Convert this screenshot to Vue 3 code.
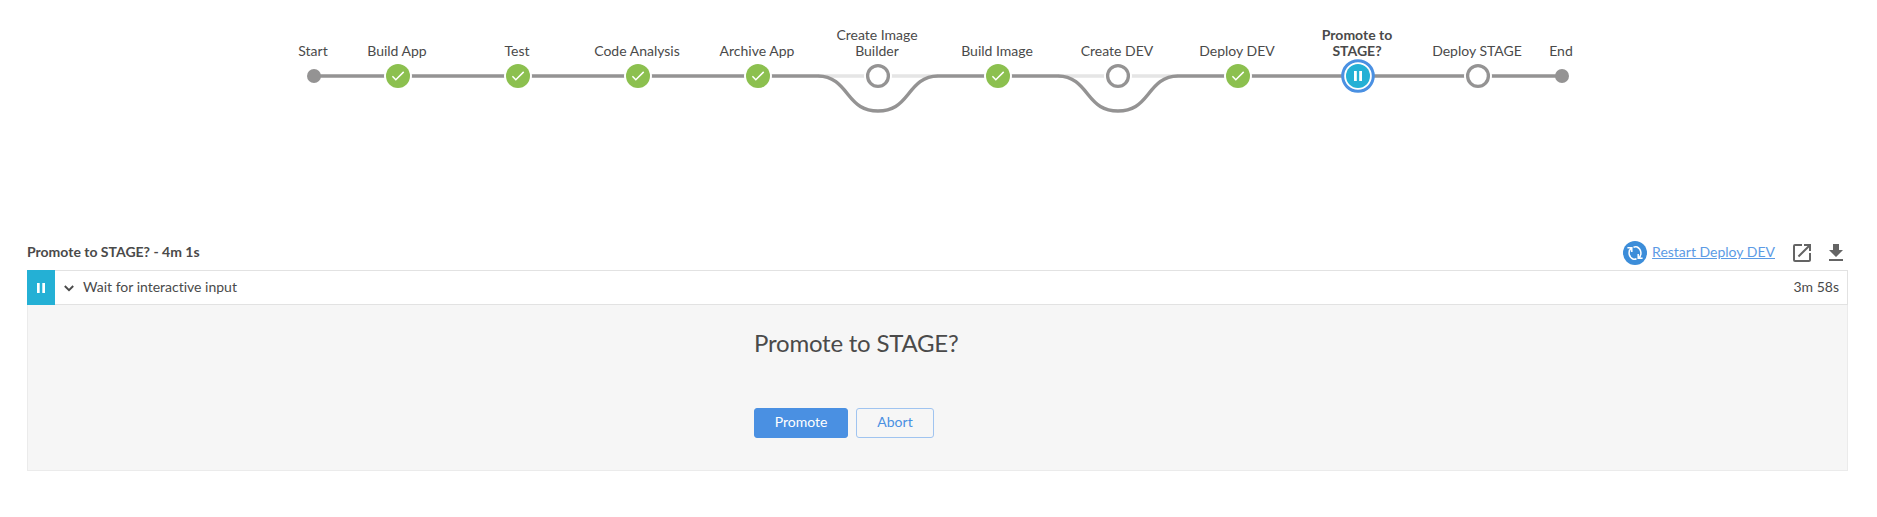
<script setup>
const stages = [
  { name: 'Start', x: 314, type: 'dot' },
  { name: 'Build App', x: 398, type: 'success' },
  { name: 'Test', x: 518, type: 'success' },
  { name: 'Code Analysis', x: 638, type: 'success' },
  { name: 'Archive App', x: 758, type: 'success' },
  { name: 'Create Image Builder', x: 878, type: 'skipped' },
  { name: 'Build Image', x: 998, type: 'success' },
  { name: 'Create DEV', x: 1118, type: 'skipped' },
  { name: 'Deploy DEV', x: 1238, type: 'success' },
  { name: 'Promote to STAGE?', x: 1358, type: 'paused' },
  { name: 'Deploy STAGE', x: 1478, type: 'pending' },
  { name: 'End', x: 1562, type: 'dot' },
]
const bypasses = [878, 1118]
</script>

<template>
  <main class="page">
    <section class="graph">
      <svg width="1877" height="140" viewBox="0 0 1877 140">
        <g class="line">
          <path class="faint" d="M818 76H938M1058 76H1178" />
          <path d="M314 76H818M938 76H1058M1178 76H1562" />
          <path
            v-for="x in bypasses"
            :key="x"
            :transform="`translate(${x} 76)`"
            d="M-60 0C-45 0-37.5 9-30 18.5C-22 28.5-15 35 0 35S22 28.5 30 18.5C37.5 9 45 0 60 0"
          />
        </g>
        <g v-for="s in stages" :key="s.name" :transform="`translate(${s.x} 76)`">
          <circle v-if="s.type === 'dot'" r="7" fill="#949393" />
          <template v-else-if="s.type === 'success'">
            <circle r="14" fill="#fff" />
            <circle r="12" fill="#8cc04f" />
            <path class="check" d="M-5.6.3L-2.2 3.7L5.7-4.1" />
          </template>
          <template v-else-if="s.type === 'paused'">
            <circle r="15.3" fill="#fff" stroke="#4a90e2" stroke-width="3" />
            <circle r="12" fill="#24b0d5" />
            <path fill="#fff" d="M-4-5h2.8V5H-4zM1.2-5H4V5H1.2z" />
          </template>
          <template v-else>
            <circle r="14" fill="#fff" />
            <circle r="10.4" fill="#fff" stroke="#949393" stroke-width="3.3" />
          </template>
        </g>
      </svg>
      <div
        v-for="s in stages"
        :key="s.name"
        class="label"
        :class="{ selected: s.type === 'paused' }"
        :style="{ left: `${s.x - 51}px` }"
      >{{ s.name }}</div>
    </section>

    <section class="steps">
      <header class="head">
        <h2>Promote to STAGE? - 4m 1s</h2>
        <div class="tools">
          <svg class="restart" width="24" height="24" viewBox="0 0 24 24">
            <circle cx="12" cy="12" r="12" fill="#3c8dd9" />
            <g fill="none" stroke="#fff" stroke-width="1.5">
              <path d="M4.4 6.7H8.8V11M8.6 6.8C4.9 9.5 5.1 15.9 10.4 18.3" />
              <path d="M19.6 17.3H15.2V13M15.4 17.2C19.1 14.5 18.9 8.1 13.6 5.7" />
              <path d="M10.5 6.2C11.7 5.7 12.9 5.6 14 5.9M13.5 17.8C12.3 18.3 11.1 18.4 10 18.1" />
            </g>
          </svg>
          <a>Restart Deploy DEV</a>
          <svg class="open" width="24" height="24" viewBox="0 0 24 24" fill="#646464">
            <path d="M19 19H5V5h7V3H5a2 2 0 0 0-2 2v14a2 2 0 0 0 2 2h14c1.1 0 2-.9 2-2v-7h-2v7zM14 3v2h3.59l-9.83 9.83 1.41 1.41L19 6.41V10h2V3h-7z" />
          </svg>
          <svg class="download" width="24" height="24" viewBox="0 0 24 24" fill="#646464">
            <path d="M19 9h-4V3H9v6H5l7 7 7-7zM5 18v2h14v-2H5z" />
          </svg>
        </div>
      </header>
      <div class="row">
        <div class="status">
          <svg width="10" height="10" viewBox="0 0 10 10"><path fill="#fff" d="M1 0h2.7v10H1zM6.3 0H9v10H6.3z" /></svg>
        </div>
        <svg class="chevron" width="10" height="7" viewBox="0 0 10 7"><path d="M.8 1L5 5.2L9.2 1" /></svg>
        <span class="step-name">Wait for interactive input</span>
        <span class="duration">3m 58s</span>
      </div>
      <div class="panel">
        <div class="form">
          <h3>Promote to STAGE?</h3>
          <div class="buttons">
            <button class="primary">Promote</button>
            <button class="secondary">Abort</button>
          </div>
        </div>
      </div>
    </section>
  </main>
</template>

<style>
body {
  margin: 0;
  background: #fff;
}
</style>

<style scoped>
.page {
  height: 517px;
  overflow: hidden;
  color: #4a4a4a;
  font: 14px/16px Lato, sans-serif;
  font-variant-ligatures: none;
}
.graph {
  position: relative;
  height: 240px;
}
.graph svg {
  display: block;
}
.line path {
  fill: none;
  stroke: #949393;
  stroke-width: 3.5;
}
.line .faint {
  stroke: #e5e5e5;
}
.check {
  fill: none;
  stroke: #fff;
  stroke-width: 1.5;
}
.label {
  position: absolute;
  bottom: 181px;
  width: 100px;
  text-align: center;
}
.label.selected {
  font-weight: 700;
}
.steps {
  width: 1821px;
  margin-left: 27px;
}
.head {
  display: flex;
  align-items: center;
  justify-content: space-between;
  height: 26px;
  margin-bottom: 4px;
}
h2 {
  margin: 0;
  padding-bottom: 2px;
  font-size: 14px;
  line-height: 24px;
}
.tools {
  display: flex;
  align-items: center;
}
.tools a {
  margin: 0 15px 0 5px;
  padding-bottom: 2px;
  color: #5c9be5;
  text-decoration: underline;
}
.download {
  margin-left: 10px;
}
.row {
  box-sizing: border-box;
  display: flex;
  align-items: center;
  height: 35px;
  padding-right: 8px;
  border: 1px solid #e2e2e2;
  border-left: 0;
}
.status {
  display: flex;
  align-items: center;
  justify-content: center;
  width: 28px;
  height: 35px;
  background: #24b0d5;
}
.chevron {
  margin: 1px 9px 0;
}
.chevron path {
  fill: none;
  stroke: #4a4a4a;
  stroke-width: 1.9;
}
.step-name,
.duration {
  padding-bottom: 2px;
}
.duration {
  margin-left: auto;
}
.panel {
  box-sizing: border-box;
  height: 166px;
  border: 1px solid #ebebeb;
  border-top: 0;
  background: #f6f6f6;
}
.form {
  margin-left: 726px;
  padding-top: 21px;
}
h3 {
  margin: 0;
  font-size: 24px;
  font-weight: 400;
  letter-spacing: -0.22px;
  line-height: 34px;
}
.buttons {
  display: flex;
  gap: 8px;
  margin-top: 48px;
}
button {
  box-sizing: border-box;
  height: 30px;
  padding: 0 0 2px;
  border: 1px solid #4a90e2;
  border-radius: 3px;
  font: inherit;
}
.primary {
  width: 94px;
  background: #4a90e2;
  color: #fff;
}
.secondary {
  width: 78px;
  border-color: #a0c4f0;
  background: transparent;
  color: #4a90e2;
}
</style>
